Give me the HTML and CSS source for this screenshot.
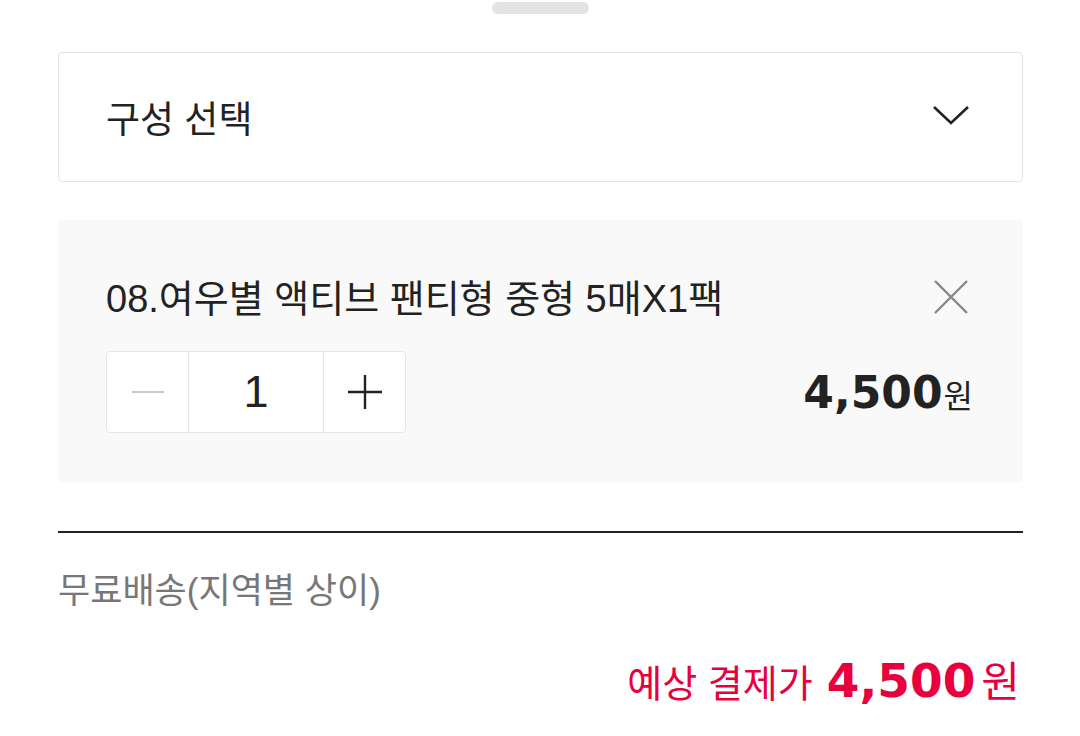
FILE: index.html
```html
<!DOCTYPE html>
<html lang="ko">
<head>
  <meta charset="UTF-8">
  <meta name="viewport" content="width=device-width, initial-scale=1.0">
  <title>구성 선택</title>
  <link rel="stylesheet" href="styles.css">
</head>
<body>
  <div class="sheet">
    <div class="handle"></div>

    <div class="select-box">
      <span class="select-label">구성 선택</span>
      <svg class="chevron" width="38" height="22" viewBox="0 0 38 22">
        <path d="M2 3 L19 19 L36 3" fill="none" stroke="#222" stroke-width="2.6"/>
      </svg>
    </div>

    <div class="item">
      <div class="item-top">
        <span class="item-name">08.여우별 액티브 팬티형 중형 5매X1팩</span>
        <svg class="remove" width="36" height="36" viewBox="0 0 36 36">
          <path d="M2 2 L34 34 M34 2 L2 34" fill="none" stroke="#888" stroke-width="2.4"/>
        </svg>
      </div>
      <div class="item-bottom">
        <div class="stepper">
          <button class="step minus">
            <svg width="32" height="4" viewBox="0 0 32 4"><path d="M0 2 H32" stroke="#ccc" stroke-width="2"/></svg>
          </button>
          <span class="qty">1</span>
          <button class="step plus">
            <svg width="34" height="34" viewBox="0 0 34 34"><path d="M0 17 H34 M17 0 V34" stroke="#222" stroke-width="2.4"/></svg>
          </button>
        </div>
        <div class="item-price"><b>4,500</b><span class="won">원</span></div>
      </div>
    </div>

    <div class="divider"></div>

    <p class="shipping">무료배송(지역별 상이)</p>

    <div class="total">
      <span class="total-label">예상 결제가</span>
      <b class="total-num">4,500</b><span class="total-won">원</span>
    </div>
  </div>
</body>
</html>
```

FILE: styles.css
```css
body {
  margin: 0;
  background: #fff;
  font-family: "Liberation Sans", "Noto Sans CJK KR", sans-serif;
  color: #222;
}
.sheet {
  padding: 2px 57px 0 58px;
}
.handle {
  width: 97px;
  height: 12px;
  margin: 0 auto;
  background: #e3e3e3;
  border-radius: 6px;
}
.select-box {
  margin-top: 38px;
  height: 128px;
  border: 1px solid #e4e4e4;
  border-radius: 4px;
  display: flex;
  align-items: center;
  justify-content: space-between;
  padding: 0 52px 0 47px;
}
.select-label {
  font-size: 37px;
  color: #222;
}
.chevron {
  display: block;
  margin-top: -4px;
}
.item {
  margin-top: 38px;
  background: #f9f9f9;
  border-radius: 4px;
  padding: 52px 50px 49px 48px;
}
.item-top {
  display: flex;
  align-items: center;
  justify-content: space-between;
  height: 46px;
}
.item-name {
  font-size: 38px;
}
.remove {
  display: block;
  margin-right: 4px;
  margin-top: 4px;
}
.item-bottom {
  margin-top: 33px;
  display: flex;
  align-items: center;
  justify-content: space-between;
}
.stepper {
  display: flex;
  height: 80px;
  border: 1px solid #e4e4e4;
  border-radius: 4px;
  background: #fff;
}
.step {
  width: 81px;
  border: none;
  background: #fff;
  padding: 0;
  display: flex;
  align-items: center;
  justify-content: center;
  border-radius: 4px;
}
.qty {
  width: 134px;
  border-left: 1px solid #e4e4e4;
  border-right: 1px solid #e4e4e4;
  display: flex;
  align-items: center;
  justify-content: center;
  font-size: 45px;
}
.item-price {
  display: flex;
  align-items: baseline;
  color: #222;
}
.item-price b {
  font-family: "DejaVu Sans", sans-serif;
  font-size: 44px;
  font-weight: 700;
}
.item-price .won {
  font-size: 32px;
  margin-left: 1px;
}
.divider {
  margin-top: 49px;
  height: 2px;
  background: #222;
}
.shipping {
  margin: 32px 0 0;
  font-size: 35px;
  color: #777;
  line-height: 52px;
}
.total {
  margin-top: 31px;
  display: flex;
  justify-content: flex-end;
  align-items: baseline;
  color: #e8003d;
}
.total-label {
  font-size: 38px;
  margin-right: 14px;
}
.total-num {
  font-family: "DejaVu Sans", sans-serif;
  font-size: 47px;
  font-weight: 700;
  margin-right: 6px;
}
.total-won {
  font-size: 42px;
  margin-right: 3px;
}
```
